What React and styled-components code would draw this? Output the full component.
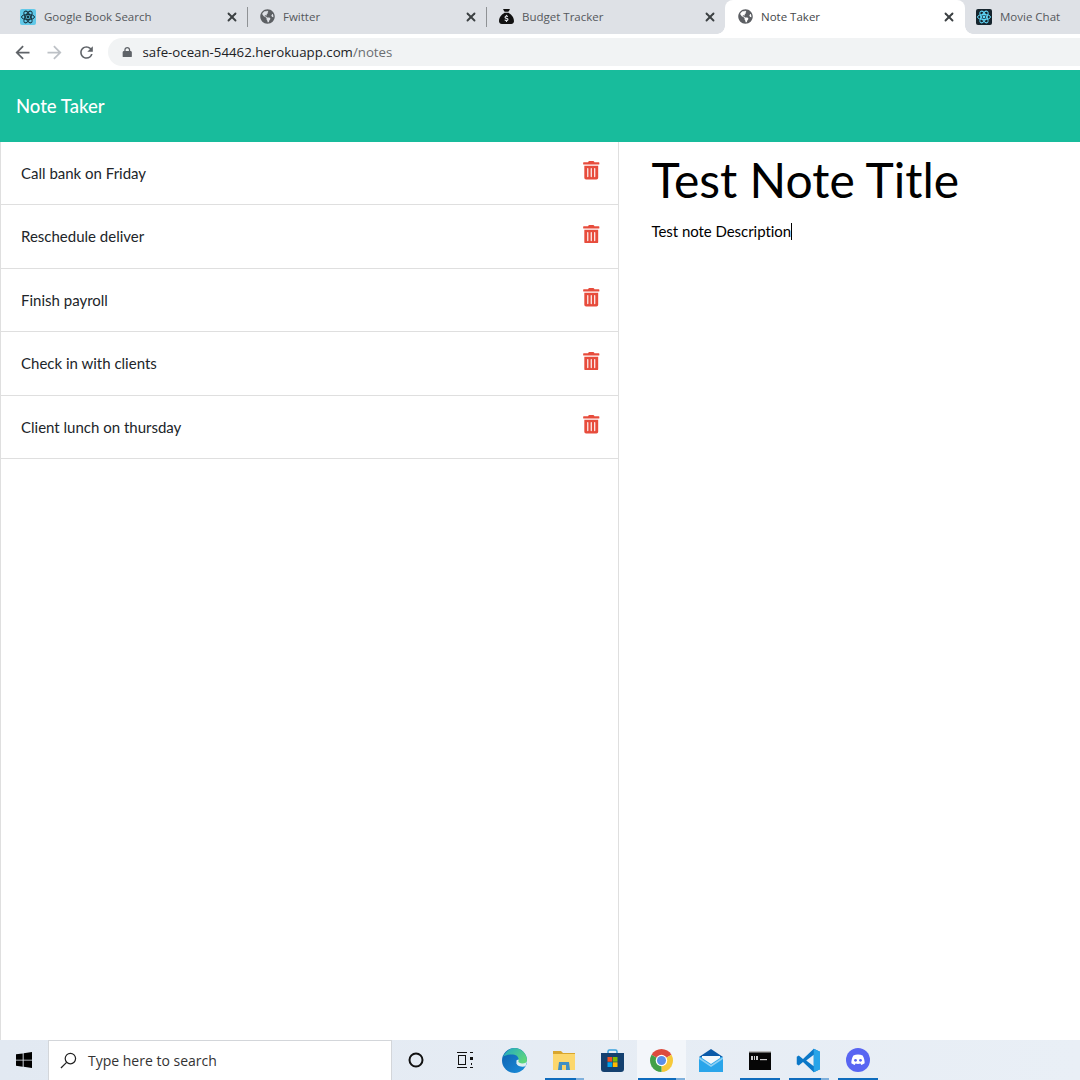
import React from "react"
import styled, { createGlobalStyle } from "styled-components"
import { FaLock, FaSackDollar } from "react-icons/fa6"
import { FaTrashAlt, FaGlobeAmericas } from "react-icons/fa"
import { MdArrowBack, MdArrowForward, MdRefresh } from "react-icons/md"
import { FiX } from "react-icons/fi"

const GlobalStyle = createGlobalStyle`
  html, body {
    margin: 0;
    padding: 0;
    background: #fff;
    overflow: hidden;
  }
`

const Page = styled.div`
  width: 1080px;
  height: 1080px;
  display: flex;
  flex-direction: column;
  overflow: hidden;
  font-family: Lato, "Liberation Sans", sans-serif;
`

const TabStrip = styled.div`
  height: 34px;
  flex: none;
  display: flex;
  padding-left: 8px;
  background: #dee1e6;
  overflow: hidden;
`

const Tab = styled.div`
  position: relative;
  flex: 0 0 ${p => (p.$active ? 240 : 239)}px;
  box-sizing: border-box;
  height: 34px;
  display: flex;
  align-items: center;
  padding: 0 ${p => (p.$active ? 9 : 8)}px 1px ${p => (p.$last ? 11 : 12)}px;
  color: ${p => (p.$active ? "#45474a" : "#55585c")};
  background: ${p => (p.$active ? "#fff" : "transparent")};
  border-radius: ${p => (p.$active ? "8px 8px 0 0" : "0")};
  font-family: "Open Sans", sans-serif;
  font-size: 11.5px;

  &::before,
  &::after {
    content: "";
    display: ${p => (p.$active ? "block" : "none")};
    position: absolute;
    bottom: 0;
    width: 8px;
    height: 8px;
  }
  &::before {
    left: -8px;
    background: radial-gradient(circle at 0 0, transparent 7.5px, #fff 8px);
  }
  &::after {
    right: -8px;
    background: radial-gradient(circle at 100% 0, transparent 7.5px, #fff 8px);
  }
`

const Separator = styled.span`
  position: absolute;
  right: -1px;
  top: 7px;
  height: 20px;
  width: 1px;
  background: #8f9295;
`

const Favicon = styled.span`
  width: 16px;
  height: 16px;
  flex: none;
  margin-right: 8px;
  display: flex;
  align-items: center;
  justify-content: center;
  color: #5c5f63;
  font-size: 15px;
`

const TabTitle = styled.span`
  flex: 1;
  white-space: nowrap;
`

const CloseIcon = styled(FiX)`
  flex: none;
  color: #3c4043;
  font-size: 14px;
  stroke-width: 3.2;
`

const Toolbar = styled.div`
  height: 36px;
  flex: none;
  box-sizing: border-box;
  padding-top: 4px;
  display: flex;
  align-items: flex-start;
  background: #fff;
`

const NavGroup = styled.div`
  display: flex;
  align-items: center;
  height: 28px;
  width: 108px;
  flex: none;
  box-sizing: border-box;
  padding-left: 6px;
`

const NavButton = styled.span`
  width: 32px;
  display: flex;
  justify-content: center;
  color: ${p => (p.$disabled ? "#bdc1c6" : "#5f6368")};
  font-size: ${p => p.$size || 21}px;
`

const Omnibox = styled.div`
  flex: 1;
  height: 28px;
  display: flex;
  align-items: center;
  padding-left: 14px;
  background: #f1f3f4;
  border-radius: 14px 0 0 14px;
  font-family: "Open Sans", sans-serif;
  font-size: 13.25px;
  color: #202124;
`

const LockIcon = styled(FaLock)`
  color: #5f6368;
  font-size: 10.5px;
  margin-right: 10px;
`

const UrlPath = styled.span`
  color: #6b6e72;
`

const NavBar = styled.header`
  height: 71.5px;
  flex: none;
  box-sizing: border-box;
  display: flex;
  align-items: center;
  padding: 0 16px;
  background: #18bc9c;
  color: #fff;
  font-size: 18.5px;
  font-weight: 500;
`

const Main = styled.main`
  flex: 1;
  min-height: 0;
  display: grid;
  grid-template-columns: 619px 1fr;
  background: #fff;
`

const NoteList = styled.ul`
  margin: 0;
  padding: 0;
  list-style: none;
  box-sizing: border-box;
  border-left: 1px solid #dfdfdf;
  border-right: 1px solid #dfdfdf;
`

const NoteRow = styled.li`
  height: 63.5px;
  box-sizing: border-box;
  display: flex;
  align-items: center;
  justify-content: space-between;
  padding: 0 20px;
  border-bottom: 1px solid #dfdfdf;
  color: #212529;
  font-size: 15px;
`

const DeleteIcon = styled(FaTrashAlt)`
  color: #e74c3c;
  font-size: 18.5px;
  margin: -5px -2px 0 0;
`

const Editor = styled.section`
  padding: 7.5px 32.5px;
  color: #000;
`

const NoteTitle = styled.h1`
  margin: 0;
  font-size: 48px;
  line-height: 62px;
  font-weight: 400;
`

const NoteText = styled.p`
  margin: 8px 0 0;
  font-size: 15px;
  letter-spacing: -0.05px;
  line-height: 24px;
  display: flex;
  align-items: center;
`

const Caret = styled.span`
  width: 1px;
  height: 17px;
  background: #000;
`

const Taskbar = styled.footer`
  height: 40px;
  flex: none;
  display: flex;
  align-items: stretch;
  background: linear-gradient(90deg, #e2e9f2, #e9eff6);
`

const StartButton = styled.div`
  width: 48px;
  display: flex;
  align-items: center;
  justify-content: center;
`

const SearchBox = styled.div`
  width: 344px;
  box-sizing: border-box;
  display: flex;
  align-items: center;
  padding-left: 11px;
  background: #fff;
  border: 1px solid #d3d6da;
  border-bottom: none;
  font-family: "Open Sans", sans-serif;
  font-size: 14px;
  color: #333;
`

const SearchGlyph = styled.svg`
  width: 17px;
  height: 17px;
  margin-right: 11px;
`

const TaskButton = styled.div`
  position: relative;
  flex: 0 0 ${p => p.$w || 49}px;
  display: flex;
  align-items: center;
  justify-content: center;
  background: ${p => (p.$active ? "#f3f6fa" : "transparent")};
  &::after {
    content: "";
    display: ${p => (p.$running ? "block" : "none")};
    position: absolute;
    bottom: 0;
    left: ${p => (p.$active ? 1 : 5)}px;
    right: ${p => (p.$active ? 1 : 4)}px;
    height: 2px;
    background: ${p =>
      p.$stacked
        ? "linear-gradient(90deg, #0f6cbd 80%, #7fb0dc 80%)"
        : "#0f6cbd"};
  }
`

const ReactIcon = ({ bg, fg }) => (
  <svg width="16" height="16" viewBox="0 0 16 16">
    <rect width="16" height="16" rx="2" fill={bg} />
    <g fill="none" stroke={fg} strokeWidth="1">
      <ellipse cx="8" cy="8" rx="6.5" ry="2.6" />
      <ellipse cx="8" cy="8" rx="6.5" ry="2.6" transform="rotate(60 8 8)" />
      <ellipse cx="8" cy="8" rx="6.5" ry="2.6" transform="rotate(120 8 8)" />
    </g>
    <circle cx="8" cy="8" r="1.4" fill={fg} />
  </svg>
)

const WindowsIcon = () => (
  <svg width="16" height="16" viewBox="0 0 16 16" fill="#000">
    <path d="M0 2.300 6.700 1.400V7.700H0ZM7.600 1.200 16 0V7.700H7.600ZM0 8.500H6.700V14.800L0 13.800ZM7.600 8.500H16V16L7.600 14.800Z" />
  </svg>
)

const EdgeIcon = () => (
  <svg width="25" height="25" viewBox="0 0 26 26">
    <defs>
      <linearGradient id="edgeGreen" x1="0" y1="0" x2="1" y2="0.6">
        <stop offset="0" stopColor="#1fa6c9" />
        <stop offset="1" stopColor="#5cd67c" />
      </linearGradient>
      <linearGradient id="edgeBlue" x1="0" y1="0" x2="1" y2="1">
        <stop offset="0" stopColor="#0d5fae" />
        <stop offset="1" stopColor="#1a8fdc" />
      </linearGradient>
    </defs>
    <circle cx="13" cy="13" r="13" fill="url(#edgeBlue)" />
    <path d="M15 13C17 11 22 12 26 14L24.500 19C21 20 16 19 15 16Z" fill="#dceef1" />
    <path d="M1 9C4 3 9 0 13 0C20 0 26 6 26 13C26 15 24 16 21 16C19 16 17 15 17 14C18 12 17 8 13 7C8 6 3 8 1 9Z" fill="url(#edgeGreen)" />
  </svg>
)

const FolderIcon = () => (
  <svg width="22" height="19" viewBox="0 0 22 19">
    <path d="M0 0h8l2 2h12v6H0Z" fill="#d9a62e" />
    <rect y="3" width="22" height="16" fill="#fcd76d" />
    <path d="M6 11h10l1 8H5Z" fill="#3f8fc5" />
    <rect x="9" y="14" width="4" height="5" fill="#f6d16b" />
  </svg>
)

const StoreIcon = () => (
  <svg width="23" height="23" viewBox="0 0 23 23">
    <path d="M7 6V2.500a1.500 1.500 0 0 1 1.500-1.500h6a1.500 1.500 0 0 1 1.500 1.500V6" fill="none" stroke="#39a0dd" strokeWidth="1.500" />
    <path d="M0 4h23v16a3 3 0 0 1-3 3H3a3 3 0 0 1-3-3Z" fill="#14406f" />
    <rect x="6.500" y="8" width="4.700" height="4.700" fill="#f25022" />
    <rect x="11.800" y="8" width="4.700" height="4.700" fill="#7fba00" />
    <rect x="6.500" y="13.300" width="4.700" height="4.700" fill="#00a4ef" />
    <rect x="11.800" y="13.300" width="4.700" height="4.700" fill="#ffb900" />
  </svg>
)

const ChromeIcon = () => (
  <svg width="23" height="23" viewBox="0 0 24 24">
    <path d="M12 12 1.610 6A12 12 0 0 1 22.390 6Z" fill="#dd4b3e" />
    <path d="M12 12 22.390 6A12 12 0 0 1 12 24Z" fill="#f6c93b" />
    <path d="M12 12 12 24A12 12 0 0 1 1.610 6Z" fill="#43a047" />
    <circle cx="12" cy="12" r="6" fill="#fff" />
    <circle cx="12" cy="12" r="4.700" fill="#5b8fe8" />
  </svg>
)

const MailIcon = () => (
  <svg width="24" height="23" viewBox="0 0 24 23">
    <path d="M0 8 12 0l12 8v3H0Z" fill="#0b5aa8" />
    <rect y="8" width="24" height="15" fill="#2aa5ea" />
    <path d="M3 7h18v2l-9 6-9-6Z" fill="#f4f8fb" />
    <path d="M0 8l12 8 12-8v2L12 18 0 10Z" fill="#8fd0f3" />
  </svg>
)

const TerminalIcon = () => (
  <svg width="22" height="19" viewBox="0 0 22 19">
    <rect width="22" height="19" fill="#060606" />
    <rect width="22" height="1.500" fill="#b9b9b9" />
    <rect x="2" y="5" width="2" height="4" fill="#ccc" />
    <rect x="5" y="5" width="1" height="4" fill="#ccc" />
    <rect x="7" y="5" width="2" height="4" fill="#ccc" />
    <rect x="11" y="8" width="7" height="1.200" fill="#ccc" />
  </svg>
)

const VsCodeIcon = () => (
  <svg width="25" height="25" viewBox="0 0 100 100">
    <path d="M71 3 96 15v70L71 97 28 56 11 70 3 65V35l8-5 17 14Z" fill="#0b78c8" />
    <path d="M71 27 41 50l30 23Z" fill="#e9eff6" />
    <path d="M71 3 96 15v70L71 97Z" fill="#28a4e8" />
  </svg>
)

const DiscordIcon = () => (
  <svg width="24" height="24" viewBox="0 0 26 26">
    <circle cx="13" cy="13" r="13" fill="#5865f2" />
    <path d="M8 8c3-1.300 7-1.300 10 0 1.500 2.500 2.300 5.500 2.200 8.500-1.200.9-2.500 1.500-3.700 1.800l-.8-1.400c-1.800.4-3.600.4-5.400 0l-.8 1.400c-1.200-.3-2.500-.9-3.700-1.800C5.700 13.500 6.500 10.500 8 8Z" fill="#fff" />
    <circle cx="10.300" cy="13.300" r="1.500" fill="#5865f2" />
    <circle cx="15.700" cy="13.300" r="1.500" fill="#5865f2" />
  </svg>
)

const TaskViewIcon = () => (
  <svg width="16" height="16" viewBox="0 0 16 16" fill="none" stroke="#111" strokeWidth="1">
    <path d="M0 .5h10M0 15.500h10" />
    <rect x="1.500" y="3.500" width="7" height="9" />
    <path d="M13 .5h3M13 15.500h3M14.500 11v2" />
    <rect x="13" y="5" width="3" height="3" fill="#111" stroke="none" />
  </svg>
)

const tabs = [
  { title: "Google Book Search", icon: <ReactIcon bg="#61c8e8" fg="#16323f" /> },
  { title: "Fwitter", icon: <FaGlobeAmericas /> },
  { title: "Budget Tracker", icon: <FaSackDollar color="#111" /> },
  { title: "Note Taker", icon: <FaGlobeAmericas />, active: true },
  { title: "Movie Chat", icon: <ReactIcon bg="#16252e" fg="#61dafb" />, last: true },
]

const notes = [
  "Call bank on Friday",
  "Reschedule deliver",
  "Finish payroll",
  "Check in with clients",
  "Client lunch on thursday",
]

const App = () => {
  return (
    <Page>
      <GlobalStyle />
      <TabStrip>
        {tabs.map((tab, i) => (
          <Tab key={tab.title} $active={tab.active} $last={tab.last}>
            <Favicon>{tab.icon}</Favicon>
            <TabTitle>{tab.title}</TabTitle>
            {!tab.last && <CloseIcon />}
            {i < 2 && <Separator />}
          </Tab>
        ))}
      </TabStrip>
      <Toolbar>
        <NavGroup>
          <NavButton><MdArrowBack /></NavButton>
          <NavButton $disabled><MdArrowForward /></NavButton>
          <NavButton $size={19}><MdRefresh /></NavButton>
        </NavGroup>
        <Omnibox>
          <LockIcon />
          safe-ocean-54462.herokuapp.com<UrlPath>/notes</UrlPath>
        </Omnibox>
      </Toolbar>
      <NavBar>Note Taker</NavBar>
      <Main>
        <NoteList>
          {notes.map(note => (
            <NoteRow key={note}>
              {note}
              <DeleteIcon />
            </NoteRow>
          ))}
        </NoteList>
        <Editor>
          <NoteTitle>Test Note Title</NoteTitle>
          <NoteText>Test note Description<Caret /></NoteText>
        </Editor>
      </Main>
      <Taskbar>
        <StartButton><WindowsIcon /></StartButton>
        <SearchBox>
          <SearchGlyph viewBox="0 0 18 18" fill="none" stroke="#222" strokeWidth="1.300">
            <circle cx="11" cy="7" r="5.500" />
            <path d="M7 11 1 17" />
          </SearchGlyph>
          Type here to search
        </SearchBox>
        <TaskButton $w={48}>
          <svg width="16" height="16" viewBox="0 0 16 16">
            <circle cx="8" cy="8" r="6.500" fill="none" stroke="#111" strokeWidth="2" />
          </svg>
        </TaskButton>
        <TaskButton><TaskViewIcon /></TaskButton>
        <TaskButton $w={51}><EdgeIcon /></TaskButton>
        <TaskButton $w={48} $running $stacked><FolderIcon /></TaskButton>
        <TaskButton><StoreIcon /></TaskButton>
        <TaskButton $running $active $stacked><ChromeIcon /></TaskButton>
        <TaskButton><MailIcon /></TaskButton>
        <TaskButton $running><TerminalIcon /></TaskButton>
        <TaskButton $running $stacked><VsCodeIcon /></TaskButton>
        <TaskButton $running><DiscordIcon /></TaskButton>
      </Taskbar>
    </Page>
  )
}

export default App
